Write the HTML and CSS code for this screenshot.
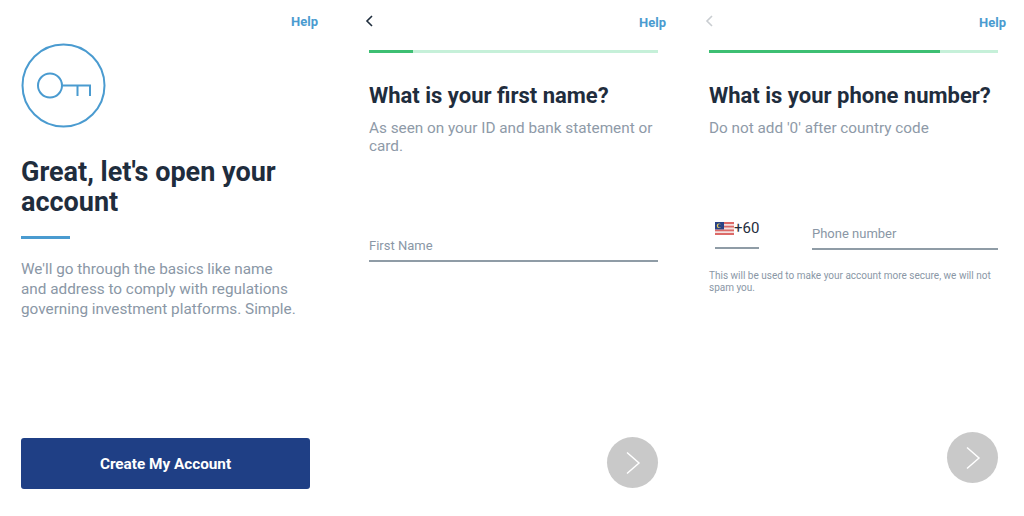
FILE: index.html
```html
<!DOCTYPE html>
<html lang="en">
<head>
<meta charset="utf-8">
<title>Open your account</title>
<link rel="stylesheet" href="styles.css">
</head>
<body>
<main class="screens">
  <section class="screen intro">
    <div class="topbar topbar-intro"><a class="help">Help</a></div>
    <svg class="key" width="86" height="86" viewBox="0 0 86 86" fill="none" stroke="#4a9bd0" stroke-width="2">
      <circle cx="42.5" cy="42.5" r="41"/>
      <circle cx="29" cy="42.5" r="12"/>
      <path d="M41 42.5H69V53M56.500 42.500V53"/>
    </svg>
    <h1>Great, let's open your account</h1>
    <div class="rule"></div>
    <p class="lead">We'll go through the basics like name and address to comply with regulations governing investment platforms. Simple.</p>
    <button class="primary">Create My Account</button>
  </section>

  <section class="screen step">
    <div class="topbar">
      <svg class="back" width="12" height="14" viewBox="0 0 12 14" fill="none" stroke="#1f2d3d" stroke-width="1.600"><path d="M8 1 3 6 8 11"/></svg>
      <a class="help">Help</a>
    </div>
    <div class="progress"><div class="bar bar-first"></div></div>
    <h2>What is your first name?</h2>
    <p class="sub">As seen on your ID and bank statement or card.</p>
    <div class="field field-name"><span>First Name</span></div>
    <div class="next-row next-row-name">
      <button class="next" aria-label="Next"><svg width="16" height="24" viewBox="0 0 16 24" fill="none" stroke="#fff" stroke-width="1.500"><path d="M2 1.500 14 12 2 22.500"/></svg></button>
    </div>
  </section>

  <section class="screen step step-last">
    <div class="topbar">
      <svg class="back" width="12" height="14" viewBox="0 0 12 14" fill="none" stroke="#c9cdd1" stroke-width="1.600"><path d="M8 1 3 6 8 11"/></svg>
      <a class="help">Help</a>
    </div>
    <div class="progress"><div class="bar bar-phone"></div></div>
    <h2>What is your phone number?</h2>
    <p class="sub">Do not add '0' after country code</p>
    <div class="phone-row">
      <div class="code">
        <svg class="flag" width="19" height="13" viewBox="0 0 19 13">
          <rect width="19" height="13" fill="#f3e0df"/>
          <path d="M0 0h19v1.900H0zM0 3.700h19v1.900H0zM0 7.400h19v1.900H0zM0 11.100h19V13H0z" fill="#dc6a68"/>
          <rect width="9" height="7.400" fill="#2a4386"/>
          <circle cx="4" cy="3.700" r="2.200" fill="#f2d45a"/>
          <circle cx="4.800" cy="3.700" r="1.800" fill="#2a4386"/>
        </svg>
        <span>+60</span>
      </div>
      <div class="field field-phone"><span>Phone number</span></div>
    </div>
    <p class="note">This will be used to make your account more secure, we will not spam you.</p>
    <div class="next-row next-row-phone">
      <button class="next" aria-label="Next"><svg width="16" height="24" viewBox="0 0 16 24" fill="none" stroke="#fff" stroke-width="1.500"><path d="M2 1.500 14 12 2 22.500"/></svg></button>
    </div>
  </section>
</main>
</body>
</html>
```
FILE: styles.css
```css
* { box-sizing: border-box; }
html, body { margin: 0; padding: 0; background: #fff; }
body { width: 1024px; height: 516px; overflow: hidden; font-family: Roboto, "Liberation Sans", sans-serif; color: #1f2d3d; }
.screens { display: flex; align-items: flex-start; padding-left: 21px; }
.screen { display: flex; flex-direction: column; flex: none; }
.intro { width: 348px; padding-right: 30px; }
.step { width: 340px; padding-right: 51px; }
.step-last { width: 315px; padding-right: 26px; }

.topbar { display: flex; justify-content: space-between; align-items: center; height: 22px; margin: 11px -8px 0 -5px; }
.topbar-intro { justify-content: flex-end; margin: 10px 21px 0 0; }
.help { font-size: 13px; font-weight: 700; color: #4a9bd0; }

.key { display: block; margin-top: 11px; }
h1 { margin: 28px 0 0; font-size: 27px; line-height: 30px; font-weight: 700; width: 290px; }
.rule { width: 49px; height: 3px; background: #4a9bd0; margin-top: 19px; }
.lead { margin: 20px 0 0; font-size: 15.3px; line-height: 20px; color: #8a97a6; width: 280px; }
.primary { display: block; width: 289px; height: 51px; margin-top: 119px; border: 0; border-radius: 3px; background: #1f3f85; color: #fff; font: 700 15.3px Roboto, sans-serif; }

.progress { height: 3px; margin-top: 17px; background: #c6f0d9; }
.bar { height: 3px; background: #3dbf73; }
.bar-first { width: 44px; }
.bar-phone { width: 231px; }
h2 { margin: 29px 0 0; font-size: 22px; line-height: 28px; font-weight: 700; white-space: nowrap; }
.sub { margin: 9px 0 0; font-size: 15.3px; line-height: 18px; color: #8e9aa8; }
.field { border-bottom: 2px solid #8f9ca6; font-size: 13px; line-height: 16px; color: #8a97a6; }
.field-name { margin-top: 83px; padding-bottom: 6px; }
.next-row { display: flex; justify-content: flex-end; }
.next-row-name { margin-top: 175px; }
.next-row-phone { margin-top: 138px; }
.next { display: flex; align-items: center; justify-content: center; width: 51px; height: 51px; padding: 0; border: 0; border-radius: 50%; background: #c9c9c9; }

.phone-row { display: flex; align-items: flex-end; margin-top: 78px; }
.code { display: flex; align-items: center; width: 44px; height: 34px; margin: 0 53px 1px 6px; padding-bottom: 6px; border-bottom: 2px solid #8f9ca6; font-size: 15px; }
.flag { flex: none; }
.field-phone { flex: 1; padding-bottom: 6px; }
.note { margin: 20px 0 0; font-size: 10px; line-height: 12px; color: #8a97a6; }
```
